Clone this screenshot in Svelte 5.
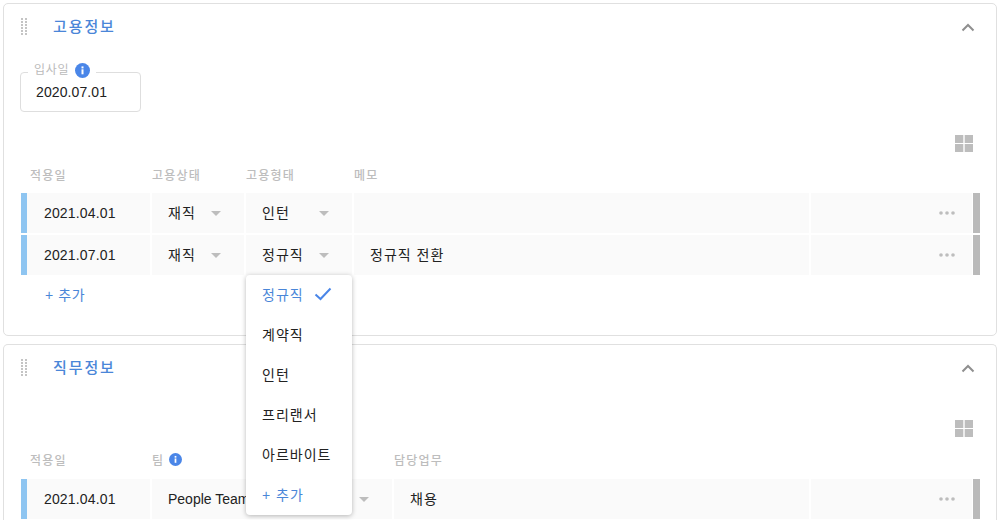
<script>
  const employmentRows = [
    { date: "2021.04.01", status: "재직", type: "인턴", memo: "" },
    { date: "2021.07.01", status: "재직", type: "정규직", memo: "정규직 전환" },
  ];
  const typeOptions = ["정규직", "계약직", "인턴", "프리랜서", "아르바이트"];
</script>

{#snippet handle()}
  <svg class="handle" width="7" height="18" viewBox="0 0 7 18">
    {#each [0, 1, 2, 3, 4, 5] as r}
      <rect x="0" y={r * 3} width="2" height="2" fill="#c4c4c4" />
      <rect x="4" y={r * 3} width="2" height="2" fill="#c4c4c4" />
    {/each}
  </svg>
{/snippet}

{#snippet chevron()}
  <svg class="chevron" width="14" height="9" viewBox="0 0 14 9">
    <path d="M1.5 7.5 L7 2 L12.5 7.5" fill="none" stroke="#8f8f8f" stroke-width="2" />
  </svg>
{/snippet}

{#snippet gridIcon()}
  <div class="grid-line">
    <svg width="18" height="17" viewBox="0 0 18 17">
      <rect x="0" y="0" width="8.3" height="8" fill="#bdbdbd" />
      <rect x="9.7" y="0" width="8.3" height="8" fill="#bdbdbd" />
      <rect x="0" y="9" width="8.3" height="8" fill="#bdbdbd" />
      <rect x="9.7" y="9" width="8.3" height="8" fill="#bdbdbd" />
    </svg>
  </div>
{/snippet}

{#snippet info(size)}
  <svg width={size} height={size} viewBox="0 0 15 15" class="info">
    <circle cx="7.5" cy="7.5" r="7.5" fill="#4a86e8" />
    <rect x="6.5" y="6.3" width="2" height="5" fill="#fff" />
    <rect x="6.5" y="3.4" width="2" height="2" fill="#fff" />
  </svg>
{/snippet}

{#snippet caret()}
  <span class="caret"></span>
{/snippet}

{#snippet rowEnd()}
  <div class="cell more">
    <svg width="16" height="4" viewBox="0 0 16 4">
      <circle cx="2" cy="2" r="1.8" fill="#bdbdbd" />
      <circle cx="8" cy="2" r="1.8" fill="#bdbdbd" />
      <circle cx="14" cy="2" r="1.8" fill="#bdbdbd" />
    </svg>
  </div>
  <div class="bar-end"></div>
{/snippet}

<div class="page">
  <section class="card first">
    <header class="card-head">
      {@render handle()}
      <h2>고용정보</h2>
      {@render chevron()}
    </header>

    <div class="field">
      <span class="legend">입사일 {@render info(15)}</span>
      2020.07.01
    </div>

    {@render gridIcon()}

    <div class="cols cols-a heads">
      <span></span>
      <span class="first-head">적용일</span>
      <span>고용상태</span>
      <span>고용형태</span>
      <span>메모</span>
    </div>

    {#each employmentRows as row}
      <div class="cols cols-a row">
        <div class="bar-start"></div>
        <div class="cell date">{row.date}</div>
        <div class="cell select"><span class="val">{row.status}</span>{@render caret()}</div>
        <div class="cell select"><span class="val">{row.type}</span>{@render caret()}</div>
        <div class="cell memo">{row.memo}</div>
        {@render rowEnd()}
      </div>
    {/each}

    <div class="add">+ 추가</div>

    <ul class="menu">
      {#each typeOptions as opt, i}
        <li class:active={i === 0}>
          {opt}
          {#if i === 0}
            <svg width="18" height="14" viewBox="0 0 18 14">
              <path d="M1.5 7.5 L6.5 12 L16.5 1.5" fill="none" stroke="#4a86e8" stroke-width="2" />
            </svg>
          {/if}
        </li>
      {/each}
      <li class="active">+ 추가</li>
    </ul>
  </section>

  <section class="card second">
    <header class="card-head">
      {@render handle()}
      <h2>직무정보</h2>
      {@render chevron()}
    </header>

    {@render gridIcon()}

    <div class="cols cols-b heads">
      <span></span>
      <span class="first-head">적용일</span>
      <span class="team-head">팀 {@render info(13)}</span>
      <span>담당업무</span>
    </div>

    <div class="cols cols-b row">
      <div class="bar-start"></div>
      <div class="cell date">2021.04.01</div>
      <div class="cell select"><span class="val latin">People Team</span>{@render caret()}</div>
      <div class="cell memo">채용</div>
      {@render rowEnd()}
    </div>
  </section>
</div>

<style>
  :global(body) {
    margin: 0;
    background: #fff;
    overflow: hidden;
  }
  .page {
    width: 994px;
    height: 517px;
    padding: 3px 0 0 3px;
    display: flex;
    flex-direction: column;
    gap: 8px;
    overflow: hidden;
    font-family: "Liberation Sans", "Noto Sans CJK KR", sans-serif;
    font-size: 14px;
    color: #222;
  }
  .card {
    position: relative;
    box-sizing: border-box;
    flex: none;
    width: 994px;
    padding: 0 17px 0 17px;
    border: 1px solid #e0e0e0;
    border-radius: 5px;
    background: #fff;
  }
  .card.first {
    height: 333px;
  }
  .card.second {
    height: 200px;
    border-bottom: none;
  }
  .card-head {
    height: 46px;
    display: flex;
    align-items: center;
  }
  .handle {
    flex: none;
  }
  h2 {
    margin: 0 0 4px 25px;
    font-size: 15px;
    font-weight: 500;
    letter-spacing: 1.9px;
    color: #4a86d8;
    flex: 1;
  }
  .chevron {
    margin-right: 4px;
  }
  .field {
    position: relative;
    box-sizing: border-box;
    width: 121px;
    height: 40px;
    margin: 22px 0 0 -1px;
    padding: 0 15px;
    display: flex;
    align-items: center;
    border: 1px solid #dedede;
    border-radius: 4px;
    font-size: 14px;
    letter-spacing: 0.1px;
  }
  .legend {
    position: absolute;
    left: 7px;
    top: -11px;
    padding: 0 6px;
    background: #fff;
    display: flex;
    align-items: center;
    gap: 6px;
    font-size: 12px;
    letter-spacing: 0.7px;
    line-height: 16px;
    color: #bbb;
  }
  .info {
    display: block;
    flex: none;
  }
  .grid-line {
    display: flex;
    justify-content: flex-end;
    height: 17px;
    margin-top: 23px;
    padding-right: 6px;
  }
  .second .grid-line {
    margin-top: 29px;
  }
  .cols {
    display: grid;
    column-gap: 2px;
  }
  .cols-a {
    grid-template-columns: 4px 123px 92px 106px 455px 161px 6px;
  }
  .cols-b {
    grid-template-columns: 4px 123px 240px 415px 161px 6px;
  }
  .cols > .bar-start {
    margin-right: -2px;
  }
  .heads {
    height: 41px;
    align-items: center;
    padding-top: 3px;
    box-sizing: border-box;
    font-size: 12px;
    font-weight: 500;
    letter-spacing: 1.2px;
    color: #bdbdbd;
  }
  .second .heads {
    height: 42px;
  }
  .first-head {
    padding-left: 3px;
  }
  .team-head {
    display: flex;
    align-items: center;
    gap: 5px;
  }
  .row {
    height: 40px;
    margin-bottom: 2px;
  }
  .bar-start {
    background: #8ec5f1;
  }
  .bar-end {
    background: #bababa;
    margin-left: -1px;
  }
  .cell {
    background: #fafafa;
    display: flex;
    align-items: center;
    font-size: 14px;
  }
  .date {
    padding-left: 17px;
    letter-spacing: 0.15px;
  }
  .select {
    padding-left: 16px;
  }
  .val {
    flex: 1;
    padding-bottom: 2px;
    letter-spacing: 1px;
  }
  .val.latin {
    padding-bottom: 0;
    letter-spacing: 0;
  }
  .caret {
    width: 0;
    height: 0;
    margin-right: 23px;
    border-left: 5px solid transparent;
    border-right: 5px solid transparent;
    border-top: 5px solid #bdbdbd;
  }
  .memo {
    padding: 0 0 2px 16px;
    letter-spacing: 1px;
  }
  .more {
    justify-content: flex-end;
    padding-right: 17px;
  }
  .add {
    margin-top: -2px;
    padding-left: 24px;
    font-size: 14px;
    letter-spacing: 0.6px;
    line-height: 40px;
    color: #4a86d8;
  }
  .menu {
    position: absolute;
    z-index: 2;
    left: 242px;
    top: 271px;
    width: 106px;
    margin: 0;
    padding: 0;
    list-style: none;
    background: #fff;
    border-radius: 4px;
    box-shadow: 0 1px 5px rgba(0, 0, 0, 0.28);
  }
  .menu li {
    box-sizing: border-box;
    height: 40px;
    padding: 0 0 2px 16px;
    display: flex;
    align-items: center;
    gap: 10px;
    font-size: 14px;
    letter-spacing: 1px;
  }
  .menu li.active {
    color: #4a86d8;
  }
</style>
